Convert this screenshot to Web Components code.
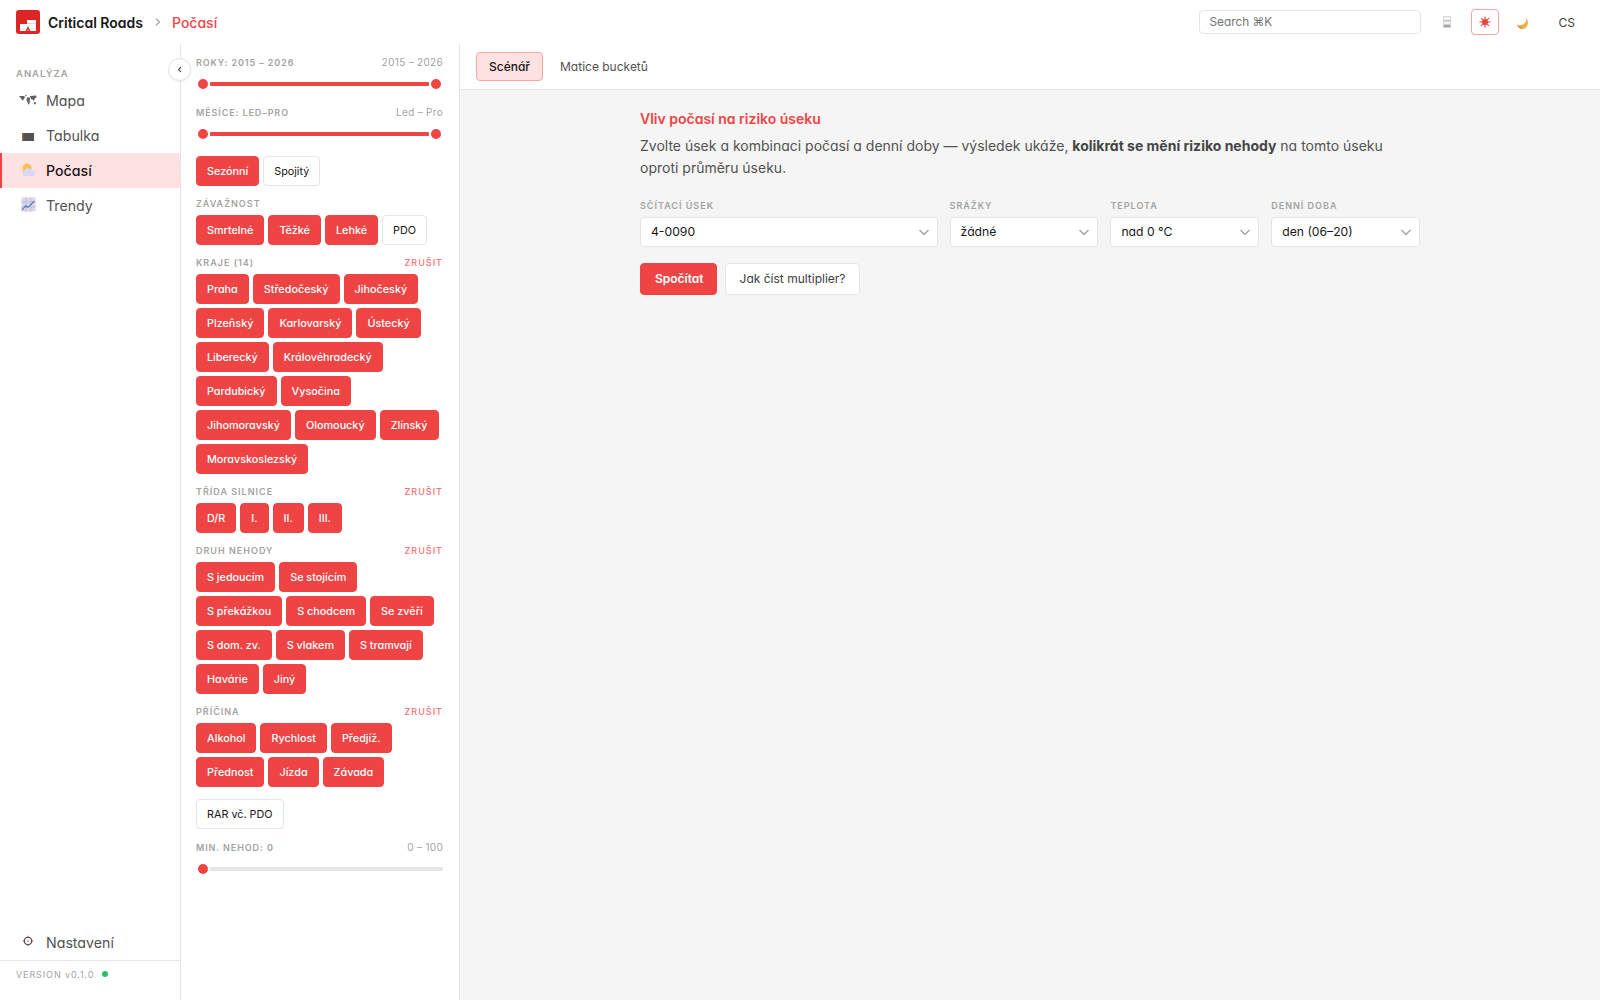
<!DOCTYPE html>
<html lang="cs">
<head>
<meta charset="utf-8">
<title>Critical Roads</title>
<style>
  html, body { margin: 0; height: 100%; background: #fff; }
  body { font-family: Inter, "Noto Sans", sans-serif; font-feature-settings: "cv11"; color: #525252; }
</style>
</head>
<body>
<cr-app>
  <cr-topbar slot="top"></cr-topbar>
  <cr-sidebar slot="side"></cr-sidebar>
  <cr-filters slot="filters"></cr-filters>
  <cr-weather slot="main"></cr-weather>
</cr-app>

<script>
const ICONS = {
  logo: `<svg width="24" height="24" viewBox="0 0 24 24"><rect width="24" height="24" rx="3" fill="#dc2626"/><path d="M4 21v-7h7v-4h9v11z" fill="#fff"/><path d="M11 13h9v1h-9z" fill="#fecaca"/><path d="M9.500 21l2.500-5 2.500 5z" fill="#dc2626"/><path d="M11.500 21l.5-2.500.5 2.500z" fill="#fff"/></svg>`,
  phone: `<svg width="12" height="14" viewBox="0 0 12 14"><rect x="2" y="1" width="8" height="12" rx="1" fill="#d6d3d1"/><rect x="3" y="2" width="6" height="7" fill="#f1f5f9"/><rect x="3" y="5" width="6" height="1.500" fill="#c4c0bc"/><rect x="3" y="10" width="6" height="2" fill="#a8a29e"/></svg>`,
  sun: `<svg width="12" height="12" viewBox="0 0 14 14"><circle cx="7" cy="7" r="3.600" fill="#ef4444"/><path d="M7 .5v3M7 10.500v3M.5 7h3M10.500 7h3M2.400 2.400l2.100 2.100M9.500 9.500l2.100 2.100M11.600 2.400 9.500 4.500M4.500 9.500l-2.100 2.100" stroke="#ef4444" stroke-width="1.300"/></svg>`,
  moon: `<svg width="15" height="15" viewBox="0 0 14 14"><path d="M10 1c1.500 3.500.3 7.300-4.500 8.300-1.300.3-2.700.2-3.700-.3C2.800 11.800 5 13 7.200 13 11.500 13 14 8 10 1z" fill="#f5b041"/><path d="M2 9.200c1 2.500 3 3.600 5 3.600l-.8-1.500-2-.6z" fill="#d98a2b"/></svg>`,
  map: `<svg width="18" height="12" viewBox="0 0 18 12"><path d="M0 2h5l1 1-1 2-1 1v1L2 4.500zM6 1h2L7 2.500zM8 3.500h3V5l-.5 1 .5 2-1.500 3-1-3-1-2zM11 2l6-.5.500 1.500-2 2-.5 2-1.500-1.500L12 5zM15 8l2 .5-.5 2-1.500-.5z" fill="#5f5f5f"/></svg>`,
  table: `<svg width="12" height="8" viewBox="0 0 12 8"><rect width="12" height="8" fill="#525252"/><rect width="1.200" height="8" fill="#a0714f"/></svg>`,
  weather: `<svg width="15" height="15" viewBox="0 0 16 16"><circle cx="6.500" cy="6.500" r="4.800" fill="#fbbf4d"/><path d="M1 8.500h6v2.500H1z" fill="#fcd98a"/><path d="M4.500 15a2.800 2.800 0 0 1-.7-5.500A3.800 3.800 0 0 1 11 8.500a3.300 3.300 0 0 1 1.500 6.500z" fill="#d9d6fb"/></svg>`,
  chart: `<svg width="15" height="15" viewBox="0 0 16 16"><rect x=".5" y=".5" width="15" height="15" fill="#ddd6e8"/><path d="M0 5.300h16M0 10.600h16M5.300 0v16M10.600 0v16" stroke="#b8aecb" stroke-width=".7"/><path d="M1 14l4-4.500 2.500 1.500L14 4.500" fill="none" stroke="#3f83c8" stroke-width="1.300"/></svg>`,
  gear: `<svg width="14" height="14" viewBox="0 0 14 14"><circle cx="7" cy="7" r="3.700" fill="none" stroke="#57534e" stroke-width="1.300"/><circle cx="7" cy="7" r="1.100" fill="#a8a29e"/><path d="M7 1.700v1.300M7 11v1.300M1.700 7H3M11 7h1.300" stroke="#78716c" stroke-width="1"/></svg>`,
  chevron: `<svg width="12" height="8" viewBox="0 0 12 8"><path d="M1.500 2 6 6.500 10.500 2" fill="none" stroke="#a3a3a3" stroke-width="1.400"/></svg>`
};

const FONT = `font-family: Inter, "Noto Sans", sans-serif; font-feature-settings: "cv11";`;

class CrApp extends HTMLElement {
  constructor() {
    super();
    this.attachShadow({ mode: 'open' });
    this.shadowRoot.innerHTML = `
    <style>
      :host { display: grid; grid-template-columns: 181px 279px 1fr; grid-template-rows: 44px 1fr; height: 100vh; overflow: hidden; ${FONT} }
      .top { grid-column: 1 / -1; }
      .col { min-height: 0; display: flex; }
      ::slotted(*) { flex: 1; }
    </style>
    <div class="top col"><slot name="top"></slot></div>
    <div class="col"><slot name="side"></slot></div>
    <div class="col"><slot name="filters"></slot></div>
    <div class="col"><slot name="main"></slot></div>`;
  }
}

class CrTopbar extends HTMLElement {
  constructor() {
    super();
    this.attachShadow({ mode: 'open' });
    this.shadowRoot.innerHTML = `
    <style>
      :host { display: flex; align-items: center; padding: 0 16px; background: #fff; }
      .logo { display: flex; margin-right: 8px; }
      .brand { font-size: 14px; font-weight: 600; color: #171717; }
      .sep { margin: 0 11px 0 12px; display: flex; }
      .page { font-size: 14px; font-weight: 500; color: #ef4444; }
      .search { margin-left: auto; width: 222px; height: 24px; box-sizing: border-box; border: 1px solid #e5e5e5; border-radius: 4px; padding: 0 10px; font-size: 11.800px; line-height: 22px; color: #737373; }
      .icon { width: 28px; height: 26px; box-sizing: border-box; display: flex; align-items: center; justify-content: center; border-radius: 4px; border: 1px solid transparent; }
      .i1 { margin-left: 12px; }
      .i2 { margin-left: 10px; border-color: #fca5a5; }
      .i3 { margin-left: 10px; }
      .lang { margin-left: 22px; margin-right: 9px; font-size: 12px; color: #404040; }
    </style>
    <span class="logo">${ICONS.logo}</span>
    <span class="brand">Critical Roads</span>
    <span class="sep"><svg width="6" height="8" viewBox="0 0 6 8"><path d="M1 .8 4.500 4 1 7.200" fill="none" stroke="#a3a3a3" stroke-width="1.200"/></svg></span>
    <span class="page">Počasí</span>
    <span class="search">Search ⌘K</span>
    <span class="icon i1">${ICONS.phone}</span>
    <span class="icon i2">${ICONS.sun}</span>
    <span class="icon i3">${ICONS.moon}</span>
    <span class="lang">CS</span>`;
  }
}

class CrNavItem extends HTMLElement {
  constructor() {
    super();
    this.attachShadow({ mode: 'open' });
    this.shadowRoot.innerHTML = `
    <style>
      :host { display: flex; align-items: center; height: 35px; box-sizing: border-box; padding-left: 18px; border-left: 2px solid transparent; font-size: 14.200px; color: #525252; }
      :host([active]) { background: #fee2e2; border-left-color: #ef4444; color: #171717; font-weight: 500; }
      .ic { width: 26px; display: flex; justify-content: center; margin-left: -5px; margin-right: 5px; }
    </style>
    <span class="ic"><slot name="icon"></slot></span>
    <slot></slot>`;
  }
}

class CrSidebar extends HTMLElement {
  constructor() {
    super();
    this.attachShadow({ mode: 'open' });
    this.shadowRoot.innerHTML = `
    <style>
      :host { display: flex; flex-direction: column; border-right: 1px solid #e5e5e5; background: #fff; position: relative; }
      .head { padding: 24px 16px 4px; font-size: 9.500px; font-weight: 600; letter-spacing: 1px; color: #a3a3a3; }
      .spacer { flex: 1; }
      .foot { border-top: 1px solid #e5e5e5; height: 40px; padding: 0 16px 13px; display: flex; align-items: center; box-sizing: border-box; font-size: 9px; letter-spacing: .9px; color: #a3a3a3; }
      .dot { width: 6px; height: 6px; border-radius: 50%; background: #22c55e; margin-left: 8px; }
      .toggle { position: absolute; top: 14px; right: -11px; width: 23px; height: 23px; box-sizing: border-box; border-radius: 50%; background: #fff; border: 1px solid #e5e5e5; box-shadow: 0 1px 2px rgba(0,0,0,.06); display: flex; align-items: center; justify-content: center; z-index: 2; }
    </style>
    <div class="head">ANALÝZA</div>
    <cr-nav-item><span slot="icon">${ICONS.map}</span>Mapa</cr-nav-item>
    <cr-nav-item><span slot="icon">${ICONS.table}</span>Tabulka</cr-nav-item>
    <cr-nav-item active><span slot="icon">${ICONS.weather}</span>Počasí</cr-nav-item>
    <cr-nav-item><span slot="icon">${ICONS.chart}</span>Trendy</cr-nav-item>
    <div class="spacer"></div>
    <cr-nav-item><span slot="icon">${ICONS.gear}</span>Nastavení</cr-nav-item>
    <div class="foot">VERSION v0.1.0<span class="dot"></span></div>
    <span class="toggle"><svg width="5" height="7" viewBox="0 0 5 7"><path d="M4 1 1.500 3.500 4 6" fill="none" stroke="#525252" stroke-width="1.100"/></svg></span>`;
  }
}

class CrChip extends HTMLElement {
  constructor() {
    super();
    this.attachShadow({ mode: 'open' });
    this.shadowRoot.innerHTML = `
    <style>
      :host { display: inline-flex; align-items: center; height: 30px; box-sizing: border-box; padding: 0 10px; border: 1px solid #e5e5e5; border-radius: 4px; background: #fff; color: #171717; font-size: 10.800px; font-weight: 400; white-space: nowrap; }
      :host([on]) { background: #ef4444; border-color: #ef4444; color: #fff; font-weight: 500; }
    </style>
    <slot></slot>`;
  }
}

class CrRange extends HTMLElement {
  constructor() {
    super();
    this.attachShadow({ mode: 'open' });
    const single = this.hasAttribute('single');
    this.shadowRoot.innerHTML = `
    <style>
      :host { display: block; }
      .row { display: flex; justify-content: space-between; font-size: 9px; line-height: 12px; }
      .name { font-weight: 600; letter-spacing: .9px; color: #a3a3a3; }
      .value { font-size: 10px; letter-spacing: .3px; line-height: 11px; color: #a3a3a3; }
      .slider { display: flex; align-items: center; height: 14px; margin-top: 8px; }
      .thumb { width: 10px; height: 10px; border-radius: 50%; background: #ef4444; border: 2px solid #fff; flex: none; }
      .track { flex: 1; height: 4px; border-radius: 1px; background: ${single ? '#e5e5e5' : '#ef4444'}; }
    </style>
    <div class="row"><span class="name">${this.getAttribute('name')}</span><span class="value">${this.getAttribute('value')}</span></div>
    <div class="slider"><span class="thumb"></span><span class="track"></span>${single ? '' : '<span class="thumb"></span>'}</div>`;
  }
}

class CrGroup extends HTMLElement {
  constructor() {
    super();
    this.attachShadow({ mode: 'open' });
    const clear = this.hasAttribute('clear');
    this.shadowRoot.innerHTML = `
    <style>
      :host { display: block; }
      .row { display: flex; justify-content: space-between; align-items: center; height: 12px; margin-bottom: 6px; font-size: 9px; letter-spacing: 1px; font-weight: 600; color: #a3a3a3; }
      .clear { color: #f87171; font-weight: 500; font-size: 9px; }
      .chips { display: flex; flex-wrap: wrap; gap: 4px; }
    </style>
    <div class="row"><span>${this.getAttribute('label') || ''}</span>${clear ? '<span class="clear">ZRUŠIT</span>' : ''}</div>
    <div class="chips"><slot></slot></div>`;
  }
}

const chips = (list) => list.map((t) => `<cr-chip on>${t}</cr-chip>`).join('');

class CrFilters extends HTMLElement {
  constructor() {
    super();
    this.attachShadow({ mode: 'open' });
    this.shadowRoot.innerHTML = `
    <style>
      :host { display: flex; flex-direction: column; box-sizing: border-box; padding: 13px 16px 0 15px; border-right: 1px solid #e5e5e5; background: #fff; }
      .g { margin-top: 11px; }
      .modes { display: flex; gap: 4px; margin-top: 15px; }
      .mt { margin-top: 12px; }
      .mt2 { margin-top: 13px; }
    </style>
    <cr-range name="ROKY: 2015 – 2026" value="2015 – 2026"></cr-range>
    <cr-range name="MĚSÍCE: LED–PRO" value="Led – Pro" style="margin-top:16px"></cr-range>
    <div class="modes"><cr-chip on>Sezónní</cr-chip><cr-chip>Spojitý</cr-chip></div>
    <cr-group class="g" label="ZÁVAŽNOST">${chips(['Smrtelné', 'Těžké', 'Lehké'])}<cr-chip>PDO</cr-chip></cr-group>
    <cr-group class="g" label="KRAJE (14)" clear>${chips(['Praha', 'Středočeský', 'Jihočeský', 'Plzeňský', 'Karlovarský', 'Ústecký', 'Liberecký', 'Královéhradecký', 'Pardubický', 'Vysočina', 'Jihomoravský', 'Olomoucký', 'Zlínský', 'Moravskoslezský'])}</cr-group>
    <cr-group class="g" label="TŘÍDA SILNICE" clear>${chips(['D/R', 'I.', 'II.', 'III.'])}</cr-group>
    <cr-group class="g" label="DRUH NEHODY" clear>${chips(['S jedoucím', 'Se stojícím', 'S překážkou', 'S chodcem', 'Se zvěří', 'S dom. zv.', 'S vlakem', 'S tramvají', 'Havárie', 'Jiný'])}</cr-group>
    <cr-group class="g" label="PŘÍČINA" clear>${chips(['Alkohol', 'Rychlost', 'Předjíž.', 'Přednost', 'Jízda', 'Závada'])}</cr-group>
    <div class="mt"><cr-chip>RAR vč. PDO</cr-chip></div>
    <cr-range class="mt2" single name="MIN. NEHOD: 0" value="0 – 100"></cr-range>`;
  }
}

class CrSelect extends HTMLElement {
  constructor() {
    super();
    this.attachShadow({ mode: 'open' });
    this.shadowRoot.innerHTML = `
    <style>
      :host { display: block; min-width: 0; }
      .label { font-size: 9px; line-height: 12px; font-weight: 600; letter-spacing: 1px; color: #a3a3a3; margin-bottom: 5px; }
      .box { display: flex; align-items: center; justify-content: space-between; height: 30px; box-sizing: border-box; padding: 0 7px 0 10px; background: #fff; border: 1px solid #e5e5e5; border-radius: 4px; font-size: 12.200px; color: #171717; }
      .chev { display: flex; }
    </style>
    <div class="label">${this.getAttribute('label')}</div>
    <div class="box"><span>${this.getAttribute('value')}</span><span class="chev">${ICONS.chevron}</span></div>`;
  }
}

class CrWeather extends HTMLElement {
  constructor() {
    super();
    this.attachShadow({ mode: 'open' });
    this.shadowRoot.innerHTML = `
    <style>
      :host { display: flex; flex-direction: column; background: #f5f5f5; min-width: 0; }
      .tabs { display: flex; align-items: center; height: 46px; box-sizing: border-box; padding: 0 16px; background: #fff; border-bottom: 1px solid #e5e5e5; }
      .tab { display: flex; align-items: center; height: 29px; box-sizing: border-box; padding: 0 12px; border: 1px solid transparent; border-radius: 4px; font-size: 12px; font-weight: 400; color: #525252; }
      .tab.on { background: #fee2e2; border-color: #fca5a5; color: #171717; font-weight: 500; margin-right: 4px; }
      .body { width: 780px; margin: 0 0 0 180px; padding-top: 20px; }
      h2 { margin: 0; font-size: 14px; line-height: 18px; font-weight: 600; color: #ef4444; }
      p { margin: 7px 0 0; font-size: 14px; line-height: 22.400px; color: #525252; }
      b { font-weight: 700; color: #454545; }
      .fields { display: grid; grid-template-columns: 2fr 1fr 1fr 1fr; gap: 12px; margin-top: 20px; }
      .actions { display: flex; gap: 8px; margin-top: 16px; }
      .btn { display: flex; align-items: center; height: 32px; box-sizing: border-box; padding: 0 14px; border-radius: 4px; border: 1px solid #e5e5e5; background: #fff; font-size: 12px; font-weight: 400; color: #404040; }
      .btn.primary { background: #ef4444; border-color: #ef4444; color: #fff; font-weight: 600; padding: 0 12px 0 14px; }
    </style>
    <div class="tabs"><span class="tab on">Scénář</span><span class="tab">Matice bucketů</span></div>
    <div class="body">
      <h2>Vliv počasí na riziko úseku</h2>
      <p>Zvolte úsek a kombinaci počasí a denní doby — výsledek ukáže, <b>kolikrát se mění riziko nehody</b> na tomto úseku oproti průměru úseku.</p>
      <div class="fields">
        <cr-select label="SČÍTACÍ ÚSEK" value="4-0090"></cr-select>
        <cr-select label="SRÁŽKY" value="žádné"></cr-select>
        <cr-select label="TEPLOTA" value="nad 0 °C"></cr-select>
        <cr-select label="DENNÍ DOBA" value="den (06–20)"></cr-select>
      </div>
      <div class="actions"><span class="btn primary">Spočítat</span><span class="btn">Jak číst multiplier?</span></div>
    </div>`;
  }
}

customElements.define('cr-app', CrApp);
customElements.define('cr-topbar', CrTopbar);
customElements.define('cr-nav-item', CrNavItem);
customElements.define('cr-sidebar', CrSidebar);
customElements.define('cr-chip', CrChip);
customElements.define('cr-range', CrRange);
customElements.define('cr-group', CrGroup);
customElements.define('cr-filters', CrFilters);
customElements.define('cr-select', CrSelect);
customElements.define('cr-weather', CrWeather);
</script>
</body>
</html>
